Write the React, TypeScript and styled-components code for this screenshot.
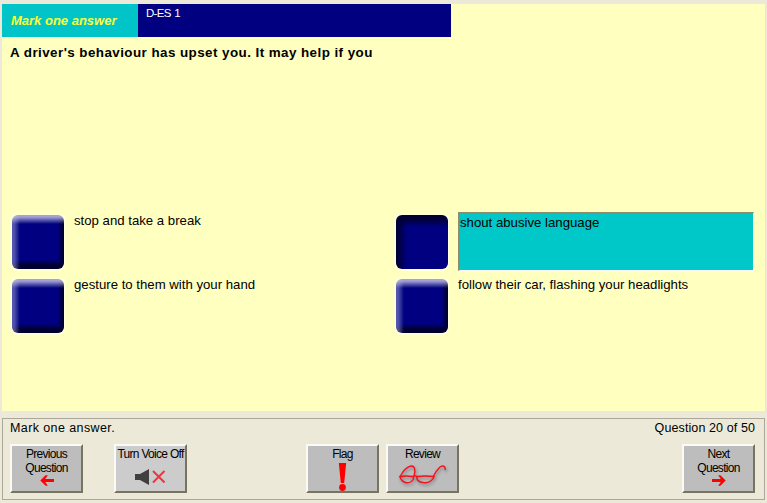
import { ReactNode } from 'react';
import styled, { createGlobalStyle } from 'styled-components';

const GlobalStyle = createGlobalStyle`
  html, body {
    margin: 0;
    padding: 0;
    background: #ece9d8;
  }
  body {
    font-family: "Liberation Sans", Arial, sans-serif;
    color: #000;
  }
`;

const ArrowIcon = ({ flip }: { flip?: boolean }) => (
  <svg width="14" height="11" viewBox="0 0 14 11" style={flip ? { transform: 'scaleX(-1)' } : undefined}>
    <path d="M0.3 5.5 L5.6 0.3 L7.8 0.3 L5.2 4 L14 4 L14 7 L5.2 7 L7.8 10.7 L5.6 10.7 Z" fill="#fe0000" />
  </svg>
);

const SpeakerIcon = () => (
  <svg width="31" height="16" viewBox="0 0 31 16">
    <path d="M0 5 H5 L14 0 V16 L5 11 H0 Z" fill="#404040" />
    <path d="M18 2 L29.5 13.5 M29.5 2 L18 13.5" stroke="#f2333a" strokeWidth="2" fill="none" />
  </svg>
);

const ExclamationIcon = () => (
  <svg width="9" height="28" viewBox="0 0 9 28">
    <path d="M0.8 0 H8.2 L6.2 20 H2.8 Z" fill="#fe0000" />
    <circle cx="4.5" cy="24.5" r="3.4" fill="#fe0000" />
  </svg>
);

const GlassesIcon = () => (
  <svg width="47" height="20" viewBox="0 0 47 20" style={{ filter: 'drop-shadow(1px 2px 1.5px rgba(70,70,70,.55))' }}>
    <g fill="none" stroke="#f5101c" strokeWidth="1.4">
      <path d="M0.8 12.5 Q7 11.5 14 12.5 Q15 13.5 14 15.5 Q12 19 7.5 18.7 Q2.5 18 0.8 12.5 Z" />
      <path d="M18 12.5 Q26 11.5 35 12.5 Q33 18 27 18.7 Q21 19 18.5 16 Q17.4 14 18 12.5 Z" />
      <path d="M14 13 Q16 10.5 18 13" />
      <path d="M1.5 12 Q5 5 10 2.6 Q14 1 15.5 4 Q16.5 7.5 15 12" />
      <path d="M34.5 12 Q37 7 40.5 3.5 Q43.5 1 45.5 2.8 Q46.5 4 46 6" />
    </g>
  </svg>
);

const Screen = styled.div`
  width: 767px;
  height: 503px;
  box-sizing: border-box;
  padding: 4px 2px 3px;
  display: flex;
  flex-direction: column;
  gap: 7px;
  overflow: hidden;
`;

const QuestionPanel = styled.main`
  height: 407px;
  background: #ffffc0;
  flex: none;
`;

const Banner = styled.header`
  width: 449px;
  height: 33px;
  display: flex;
`;

const BannerLabel = styled.div`
  width: 136px;
  background: #00c4c8;
  color: #ffff33;
  font-size: 13px;
  font-weight: bold;
  font-style: italic;
  line-height: 33px;
  padding-left: 9px;
  box-sizing: border-box;
`;

const BannerCode = styled.div`
  flex: 1;
  background: #000080;
  color: #fff;
  font-size: 11.5px;
  line-height: 12px;
  letter-spacing: -0.7px;
  word-spacing: 1px;
  padding: 3px 0 0 8px;
`;

const QuestionText = styled.h1`
  margin: 0;
  padding: 8px 0 0 8px;
  height: 16px;
  font-size: 13.4px;
  line-height: 16px;
  font-weight: bold;
  letter-spacing: 0.44px;
`;

const AnswerGrid = styled.div`
  margin: 153px 0 0 10px;
  display: grid;
  grid-template-columns: 384px 358px;
  grid-auto-rows: 64px;
`;

const AnswerRow = styled.div`
  display: flex;
  align-items: flex-start;
  gap: 10px;
`;

const AnswerKey = styled.button<{ $pressed?: boolean }>`
  flex: none;
  width: 52px;
  height: 54px;
  margin-top: 1px;
  padding: 0;
  border: 0;
  border-radius: 6px;
  box-shadow: 0 0 0 2px #ffffd8;
  background: ${({ $pressed }) =>
    $pressed
      ? `linear-gradient(to bottom, #000030 3px, rgba(0, 0, 48, 0) 12px),
         linear-gradient(to right, #000038 2px, rgba(0, 0, 56, 0) 11px),
         #000080`
      : `linear-gradient(to bottom, rgba(190, 190, 225, 0.85) 2px, rgba(190, 190, 225, 0) 9px),
         linear-gradient(to right, rgba(120, 120, 195, 0.7) 2px, rgba(120, 120, 195, 0) 8px),
         linear-gradient(to top, #000030 4px, rgba(0, 0, 48, 0) 9px),
         linear-gradient(to left, #000038 2px, rgba(0, 0, 56, 0) 6px),
         #000080`};
`;

const AnswerText = styled.div<{ $selected?: boolean }>`
  font-size: 13.2px;
  line-height: 15px;
  margin-top: -1px;
  ${({ $selected }) =>
    $selected &&
    `
    width: 296px;
    height: 59px;
    margin-top: -2px;
    box-sizing: border-box;
    padding: 1px 0;
    background: #00c8c8;
    border-style: solid;
    border-width: 2px 1px 1px 2px;
    border-color: #8d8d6e #fff #fff #8d8d6e;
  `}
`;

const ControlPanel = styled.footer`
  height: 82px;
  box-sizing: border-box;
  border: 1px solid #aca899;
  padding: 2px 9px 0 7px;
`;

const StatusRow = styled.div`
  display: flex;
  justify-content: space-between;
  font-size: 12.5px;
  line-height: 15px;
  margin-bottom: 8px;
`;

const StatusText = styled.span<{ $spacing: number }>`
  letter-spacing: ${({ $spacing }) => $spacing}px;
`;

const ButtonRow = styled.div`
  display: flex;
`;

const Spread = styled.div<{ $width: number }>`
  width: ${({ $width }) => $width}px;
  flex: none;
`;

const ToolButton = styled.button<{ $light?: boolean }>`
  width: 73px;
  height: 49px;
  flex: none;
  box-sizing: border-box;
  padding: 2px 0 0;
  background: ${({ $light }) => ($light ? '#cccccc' : '#bdbdbd')};
  border: 2px solid;
  border-color: #fbfaf4 #76735f #76735f #fbfaf4;
  font-family: inherit;
  font-size: 12px;
  line-height: 13.5px;
  letter-spacing: -0.7px;
  white-space: nowrap;
  color: #000;
  display: flex;
  flex-direction: column;
  align-items: center;
`;

const ButtonIcon = styled.div<{ $top: number }>`
  margin-top: ${({ $top }) => $top}px;
  display: flex;
  line-height: 0;
`;

type ToolProps = { label: ReactNode; icon: ReactNode; top: number; light?: boolean };

const Tool = ({ label, icon, top, light }: ToolProps) => (
  <ToolButton $light={light}>
    <span>{label}</span>
    <ButtonIcon $top={top}>{icon}</ButtonIcon>
  </ToolButton>
);

export default function App() {
  return (
    <>
      <GlobalStyle />
      <Screen>
        <QuestionPanel>
          <Banner>
            <BannerLabel>Mark one answer</BannerLabel>
            <BannerCode>D-ES 1</BannerCode>
          </Banner>
          <QuestionText>A driver's behaviour has upset you. It may help if you</QuestionText>
          <AnswerGrid>
            <AnswerRow>
              <AnswerKey />
              <AnswerText>stop and take a break</AnswerText>
            </AnswerRow>
            <AnswerRow>
              <AnswerKey $pressed />
              <AnswerText $selected>shout abusive language</AnswerText>
            </AnswerRow>
            <AnswerRow>
              <AnswerKey />
              <AnswerText>gesture to them with your hand</AnswerText>
            </AnswerRow>
            <AnswerRow>
              <AnswerKey />
              <AnswerText>follow their car, flashing your headlights</AnswerText>
            </AnswerRow>
          </AnswerGrid>
        </QuestionPanel>
        <ControlPanel>
          <StatusRow>
            <StatusText $spacing={0.4}>Mark one answer.</StatusText>
            <StatusText $spacing={0.1}>Question 20 of 50</StatusText>
          </StatusRow>
          <ButtonRow>
            <Tool label={<>Previous<br />Question</>} icon={<ArrowIcon />} top={0} />
            <Spread $width={31} />
            <Tool label="Turn Voice Off" icon={<SpeakerIcon />} top={7} light />
            <Spread $width={119} />
            <Tool label="Flag" icon={<ExclamationIcon />} top={1} />
            <Spread $width={7} />
            <Tool label="Review" icon={<GlassesIcon />} top={2} />
            <Spread $width={223} />
            <Tool label={<>Next<br />Question</>} icon={<ArrowIcon flip />} top={0} />
          </ButtonRow>
        </ControlPanel>
      </Screen>
    </>
  );
}
